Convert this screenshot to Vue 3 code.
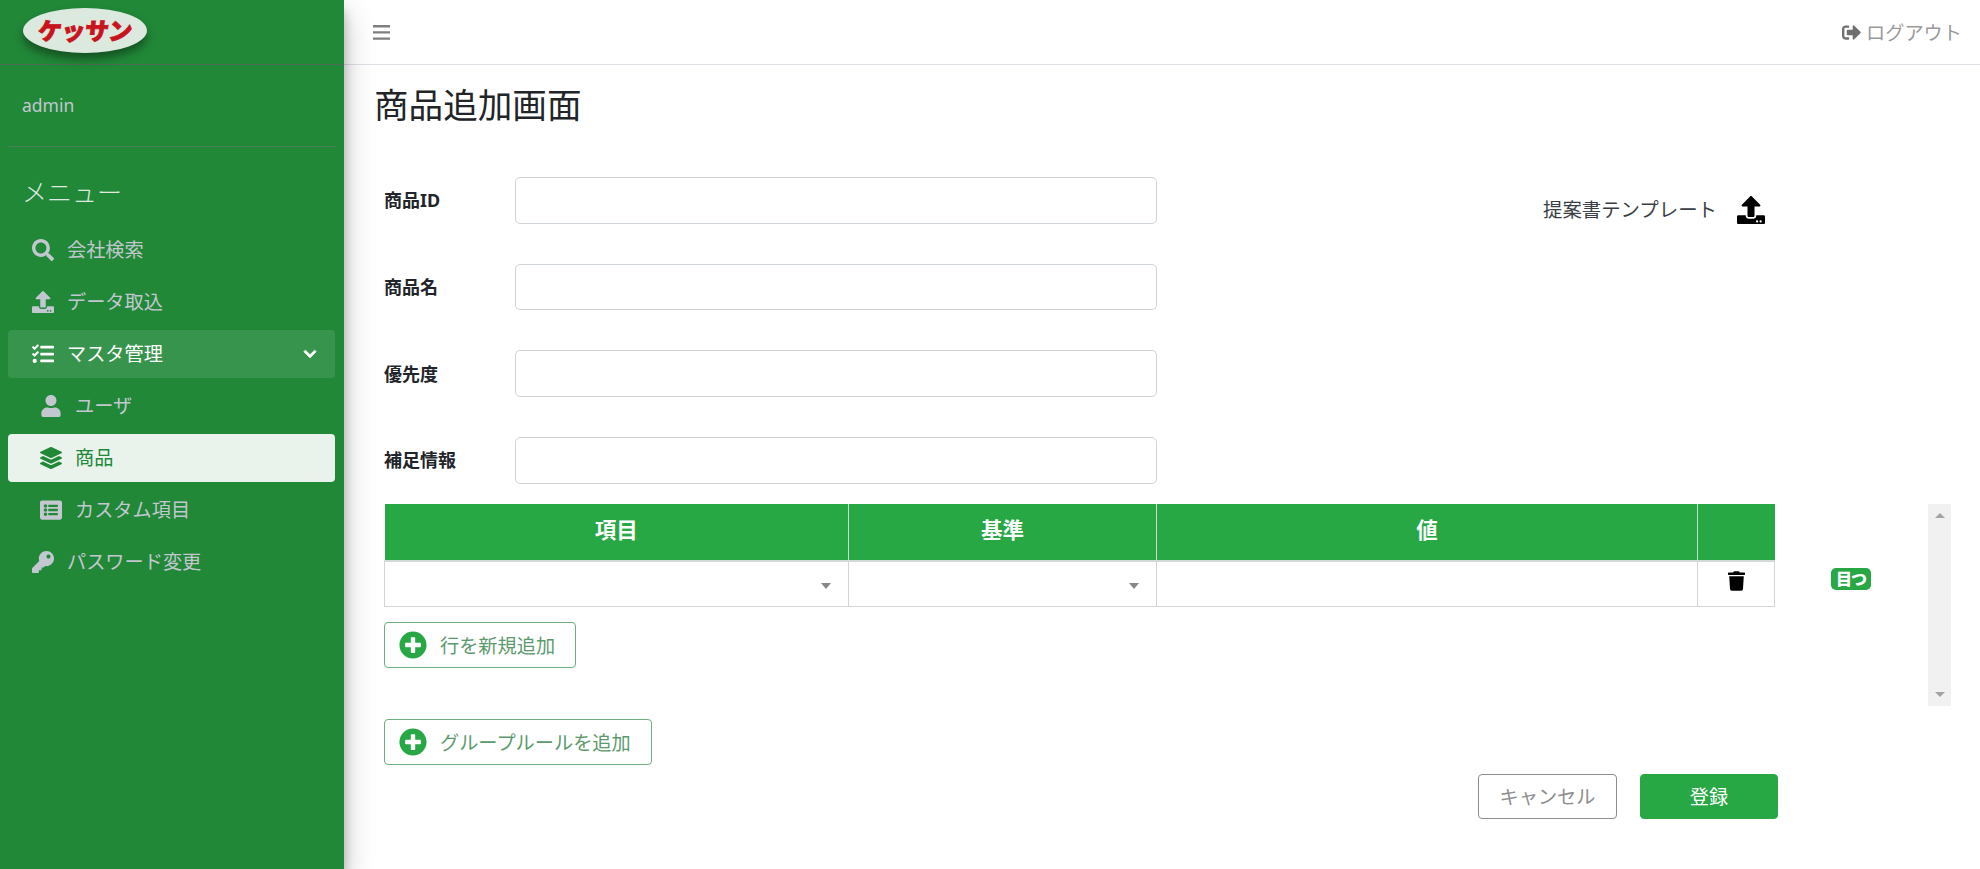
<template>
  <div class="page">
    <aside class="sidebar">
      <div class="brand">
        <div class="logo"><span class="logo-text">ケッサン</span></div>
      </div>
      <div class="user-panel">admin</div>
      <div class="menu-title">メニュー</div>
      <nav class="menu">
        <a v-for="item in menu" :key="item.label" class="menu-item" :class="[item.state, { sub: item.sub }]">
          <svg class="menu-icon" :viewBox="icons[item.icon].box"><path :d="icons[item.icon].d" /></svg>
          <span>{{ item.label }}</span>
          <svg v-if="item.state === 'open'" class="chevron" :viewBox="icons.chevron.box"><path :d="icons.chevron.d" /></svg>
        </a>
      </nav>
    </aside>

    <div class="main">
      <header class="topbar">
        <svg class="bars" viewBox="0 0 17 15"><path d="M0 0h17v2.4H0zM0 6.2h17v2.4H0zM0 12.4h17v2.4H0z" /></svg>
        <a class="logout">
          <svg class="logout-icon" :viewBox="icons.signout.box"><path :d="icons.signout.d" /></svg>
          ログアウト
        </a>
      </header>

      <section class="content">
        <h1 class="title">商品追加画面</h1>

        <div class="top-form">
          <div class="fields">
            <div v-for="field in fields" :key="field" class="field">
              <label>{{ field }}</label>
              <input type="text">
            </div>
          </div>
          <div class="template">
            <span>提案書テンプレート</span>
            <svg class="template-icon" :viewBox="icons.upload.box"><path :d="icons.upload.d" /></svg>
          </div>
        </div>

        <div class="rule-row">
          <div class="rule-main">
            <table class="rule-table">
              <thead>
                <tr>
                  <th class="col-item">項目</th>
                  <th class="col-base">基準</th>
                  <th class="col-value">値</th>
                  <th class="col-del"></th>
                </tr>
              </thead>
              <tbody>
                <tr>
                  <td><div class="select-cell"><i class="caret"></i></div></td>
                  <td><div class="select-cell"><i class="caret"></i></div></td>
                  <td></td>
                  <td class="del-cell">
                    <svg class="trash" :viewBox="icons.trash.box"><path :d="icons.trash.d" /></svg>
                  </td>
                </tr>
              </tbody>
            </table>
            <button class="outline-btn add-row">
              <svg class="plus" :viewBox="icons.plus.box"><path :d="icons.plus.d" /></svg>
              行を新規追加
            </button>
          </div>
          <span class="badge">目つ</span>
          <div class="scroll">
            <i class="arrow-up"></i>
            <i class="arrow-down"></i>
          </div>
        </div>

        <button class="outline-btn add-group">
          <svg class="plus" :viewBox="icons.plus.box"><path :d="icons.plus.d" /></svg>
          グループルールを追加
        </button>

        <div class="actions">
          <button class="btn-cancel">キャンセル</button>
          <button class="btn-submit">登録</button>
        </div>
      </section>
    </div>
  </div>
</template>

<script setup>
const icons = {
  search: { box: '0 0 512 512', d: 'M505 442.7L405.3 343c-4.5-4.5-10.6-7-17-7H372c27.6-35.3 44-79.7 44-128C416 93.1 322.9 0 208 0S0 93.1 0 208s93.1 208 208 208c48.3 0 92.7-16.4 128-44v16.3c0 6.4 2.5 12.5 7 17l99.7 99.7c9.4 9.4 24.6 9.4 33.9 0l28.3-28.3c9.4-9.4 9.4-24.6.1-34zM208 336c-70.7 0-128-57.2-128-128 0-70.7 57.2-128 128-128 70.7 0 128 57.2 128 128 0 70.7-57.2 128-128 128z' },
  upload: { box: '0 0 512 512', d: 'M296 384h-80c-13.3 0-24-10.7-24-24V192h-87.7c-17.8 0-26.7-21.5-14.1-34.1L242.3 5.7c7.5-7.5 19.8-7.5 27.3 0l152.2 152.2c12.6 12.6 3.7 34.1-14.1 34.1H320v168c0 13.3-10.7 24-24 24zm216-8v112c0 13.3-10.7 24-24 24H24c-13.3 0-24-10.7-24-24V376c0-13.3 10.7-24 24-24h136v8c0 30.9 25.1 56 56 56h80c30.9 0 56-25.1 56-56v-8h136c13.3 0 24 10.7 24 24zm-124 88c0-11-9-20-20-20s-20 9-20 20 9 20 20 20 20-9 20-20zm64 0c0-11-9-20-20-20s-20 9-20 20 9 20 20 20 20-9 20-20z' },
  tasks: { box: '0 0 512 512', d: 'M139.61 35.5a12 12 0 0 0-17 0L58.93 98.81l-22.7-22.12a12 12 0 0 0-17 0L3.53 92.41a12 12 0 0 0 0 17l47.59 47.4a12.78 12.78 0 0 0 17.61 0l15.59-15.62L156.52 69a12.09 12.09 0 0 0 .09-17zm0 159.19a12 12 0 0 0-17 0l-63.68 63.72-22.7-22.1a12 12 0 0 0-17 0L3.53 252a12 12 0 0 0 0 17L51 316.5a12.77 12.77 0 0 0 17.6 0l15.7-15.69 72.2-72.22a12 12 0 0 0 .09-16.9zM64 368c-26.49 0-48.59 21.5-48.59 48S37.53 464 64 464a48 48 0 0 0 0-96zm432 16H208a16 16 0 0 0-16 16v32a16 16 0 0 0 16 16h288a16 16 0 0 0 16-16v-32a16 16 0 0 0-16-16zm0-320H208a16 16 0 0 0-16 16v32a16 16 0 0 0 16 16h288a16 16 0 0 0 16-16V80a16 16 0 0 0-16-16zm0 160H208a16 16 0 0 0-16 16v32a16 16 0 0 0 16 16h288a16 16 0 0 0 16-16v-32a16 16 0 0 0-16-16z' },
  user: { box: '0 0 448 512', d: 'M224 256c70.7 0 128-57.3 128-128S294.7 0 224 0 96 57.3 96 128s57.3 128 128 128zm89.6 32h-16.7c-22.2 10.2-46.9 16-72.9 16s-50.6-5.8-72.9-16h-16.7C60.2 288 0 348.2 0 422.4V464c0 26.5 21.5 48 48 48h352c26.5 0 48-21.5 48-48v-41.6c0-74.2-60.2-134.4-134.4-134.4z' },
  layers: { box: '0 0 512 512', d: 'M12.41 148.02l232.94 105.67c6.8 3.09 14.49 3.09 21.29 0l232.94-105.67c16.55-7.51 16.55-32.52 0-40.03L266.65 2.31a25.607 25.607 0 0 0-21.29 0L12.41 107.98c-16.55 7.51-16.55 32.53 0 40.04zm487.18 88.28l-58.09-26.33-161.64 73.27c-7.56 3.43-15.59 5.17-23.86 5.17s-16.29-1.74-23.86-5.17L70.51 209.97l-58.1 26.33c-16.55 7.5-16.55 32.5 0 40l232.94 105.59c6.8 3.08 14.49 3.08 21.29 0L499.59 276.3c16.55-7.5 16.55-32.5 0-40zm0 127.8l-57.87-26.23-161.86 73.37c-7.56 3.43-15.59 5.17-23.86 5.17s-16.29-1.74-23.86-5.17L70.29 337.87 12.41 364.1c-16.55 7.5-16.55 32.5 0 40l232.94 105.59c6.8 3.08 14.49 3.08 21.29 0L499.59 404.1c16.55-7.5 16.55-32.5 0-40z' },
  list: { box: '0 0 512 512', d: 'M464 480H48c-26.51 0-48-21.49-48-48V80c0-26.51 21.49-48 48-48h416c26.51 0 48 21.49 48 48v352c0 26.51-21.49 48-48 48zM128 120c-22.091 0-40 17.909-40 40s17.909 40 40 40 40-17.909 40-40-17.909-40-40-40zm0 96c-22.091 0-40 17.909-40 40s17.909 40 40 40 40-17.909 40-40-17.909-40-40-40zm0 96c-22.091 0-40 17.909-40 40s17.909 40 40 40 40-17.909 40-40-17.909-40-40-40zm288-136v-32c0-6.627-5.373-12-12-12H204c-6.627 0-12 5.373-12 12v32c0 6.627 5.373 12 12 12h200c6.627 0 12-5.373 12-12zm0 96v-32c0-6.627-5.373-12-12-12H204c-6.627 0-12 5.373-12 12v32c0 6.627 5.373 12 12 12h200c6.627 0 12-5.373 12-12zm0 96v-32c0-6.627-5.373-12-12-12H204c-6.627 0-12 5.373-12 12v32c0 6.627 5.373 12 12 12h200c6.627 0 12-5.373 12-12z' },
  key: { box: '0 0 512 512', d: 'M512 176.001C512 273.203 433.202 352 336 352c-11.22 0-22.19-1.062-32.827-3.069l-24.012 27.014A23.999 23.999 0 0 1 261.223 384H224v40c0 13.255-10.745 24-24 24h-40v40c0 13.255-10.745 24-24 24H24c-13.255 0-24-10.745-24-24v-78.059c0-6.365 2.529-12.47 7.029-16.971l161.802-161.802C163.108 213.814 160 195.271 160 176 160 78.798 238.797.001 335.999 0 433.488-.001 512 78.511 512 176.001zM336 128c0 26.51 21.49 48 48 48s48-21.49 48-48-21.49-48-48-48-48 21.49-48 48z' },
  trash: { box: '0 0 448 512', d: 'M432 32H312l-9.4-18.7A24 24 0 0 0 281.1 0H166.8a23.72 23.72 0 0 0-21.4 13.3L136 32H16A16 16 0 0 0 0 48v32a16 16 0 0 0 16 16h416a16 16 0 0 0 16-16V48a16 16 0 0 0-16-16zM53.2 467a48 48 0 0 0 47.9 45h245.8a48 48 0 0 0 47.9-45L416 128H32z' },
  plus: { box: '0 0 512 512', d: 'M256 8C119 8 8 119 8 256s111 248 248 248 248-111 248-248S393 8 256 8zm144 276c0 6.6-5.4 12-12 12h-92v92c0 6.6-5.4 12-12 12h-56c-6.6 0-12-5.4-12-12v-92h-92c-6.6 0-12-5.4-12-12v-56c0-6.6 5.4-12 12-12h92v-92c0-6.6 5.4-12 12-12h56c6.6 0 12 5.4 12 12v92h92c6.6 0 12 5.4 12 12v56z' },
  chevron: { box: '0 0 448 512', d: 'M207.029 381.476L12.686 187.132c-9.373-9.373-9.373-24.569 0-33.941l22.667-22.667c9.357-9.357 24.522-9.375 33.901-.04L224 284.505l154.745-154.021c9.379-9.335 24.544-9.317 33.901.04l22.667 22.667c9.373 9.373 9.373 24.569 0 33.941L240.971 381.476c-9.373 9.372-24.569 9.372-33.942 0z' },
  signout: { box: '0 0 512 512', d: 'M497 273L329 441c-15 15-41 4.5-41-17v-96H152c-13.3 0-24-10.7-24-24v-96c0-13.3 10.7-24 24-24h136V88c0-21.4 25.9-32 41-17l168 168c9.3 9.4 9.3 24.6 0 34zM192 436v-40c0-6.6-5.4-12-12-12H96c-17.7 0-32-14.3-32-32V160c0-17.7 14.3-32 32-32h84c6.6 0 12-5.4 12-12V76c0-6.6-5.4-12-12-12H96c-53 0-96 43-96 96v192c0 53 43 96 96 96h84c6.6 0 12-5.4 12-12z' },
};

const menu = [
  { label: '会社検索', icon: 'search' },
  { label: 'データ取込', icon: 'upload' },
  { label: 'マスタ管理', icon: 'tasks', state: 'open' },
  { label: 'ユーザ', icon: 'user', sub: true },
  { label: '商品', icon: 'layers', sub: true, state: 'active' },
  { label: 'カスタム項目', icon: 'list', sub: true },
  { label: 'パスワード変更', icon: 'key' },
];

const fields = ['商品ID', '商品名', '優先度', '補足情報'];
</script>

<style>
html, body {
  margin: 0;
  height: 100%;
  overflow: hidden;
  background: #fff;
}
</style>

<style scoped>
.page {
  display: flex;
  height: 869px;
  font-family: "Noto Sans", "Noto Sans CJK JP", sans-serif;
  font-size: 19.2px;
  color: #212529;
}

.sidebar {
  position: relative;
  z-index: 2;
  flex: 0 0 344px;
  background: #218838;
  box-shadow: 0 14px 28px rgba(0, 0, 0, .25), 0 10px 10px rgba(0, 0, 0, .22);
  color: #c2c7d0;
}

.brand {
  height: 65px;
  box-sizing: border-box;
  border-bottom: 1px solid #4b6b52;
  padding: 8px 0 0 23px;
}

.logo {
  width: 124px;
  height: 45px;
  border-radius: 50%;
  background: #dce9df;
  box-shadow: 0 6px 10px rgba(0, 0, 0, .4);
  display: flex;
  align-items: center;
  justify-content: center;
}

.logo-text {
  color: #c8141c;
  font-size: 24px;
  line-height: 1;
  font-weight: 900;
  letter-spacing: -.5px;
  -webkit-text-stroke: .8px #c8141c;
  transform: skewX(-6deg);
}

.user-panel {
  margin: 0 8px;
  height: 82px;
  padding-left: 14px;
  box-sizing: border-box;
  border-bottom: 1px solid #4b7f58;
  display: flex;
  align-items: center;
  font-size: 17.5px;
  padding-bottom: 2px;
}

.menu-title {
  margin: 27px 0 0 22px;
  height: 36px;
  line-height: 36px;
  font-size: 25px;
  font-weight: 300;
  color: #dfe8e1;
}

.menu {
  display: flex;
  flex-direction: column;
  gap: 4px;
  margin: 16px 8px 0;
  width: 327px;
}

.menu-item {
  height: 48px;
  display: flex;
  align-items: center;
  padding-left: 24px;
  border-radius: 4px;
  line-height: 1;
}

.menu-icon {
  width: 22px;
  height: 22px;
  fill: #c2c7d0;
  margin-right: 13px;
  flex: none;
}

.menu-item.sub {
  padding-left: 32px;
}

.menu-item.open {
  background: rgba(255, 255, 255, .1);
  color: #fff;
}

.menu-item.open .menu-icon {
  fill: #fff;
}

.menu-item.active {
  background: #e9f3ec;
  color: #218838;
}

.menu-item.active .menu-icon {
  fill: #218838;
}

.chevron {
  width: 14px;
  height: 14px;
  fill: #fff;
  stroke: #fff;
  stroke-width: 30;
  margin-left: auto;
  margin-right: 18px;
}

.main {
  flex: 1;
  min-width: 0;
}

.topbar {
  height: 64px;
  border-bottom: 1px solid #dee2e6;
  display: flex;
  align-items: center;
  justify-content: space-between;
  padding: 0 18px 0 29px;
}

.bars {
  width: 17px;
  height: 15px;
  fill: #7f7f7f;
}

.logout {
  display: flex;
  align-items: center;
  color: #9a9a9a;
}

.logout-icon {
  width: 19px;
  height: 19px;
  fill: #6f6f6f;
  margin-right: 5px;
}

.content {
  padding: 0 0 0 40px;
}

.title {
  margin: 15px 0 0 -10px;
  height: 50px;
  line-height: 50px;
  font-size: 34.6px;
  font-weight: 400;
}

.top-form {
  display: flex;
  margin-top: 47px;
}

.fields {
  display: flex;
  flex-direction: column;
  gap: 40px;
  width: 773px;
}

.field {
  display: flex;
  align-items: center;
  height: 46.67px;
}

.field label {
  width: 131px;
  font-size: 18px;
  font-weight: 700;
  margin-top: -2px;
}

.field input {
  width: 642px;
  height: 46.67px;
  box-sizing: border-box;
  border: 1px solid #ced4da;
  border-radius: 5px;
  background: #fff;
}

.template {
  display: flex;
  align-items: flex-start;
  margin-left: 386px;
  padding-top: 19px;
  color: #3a3f45;
  font-size: 19.4px;
}

.template span {
  line-height: 28px;
}

.template-icon {
  width: 28px;
  height: 28px;
  margin-left: 20px;
  fill: #000;
}

.rule-row {
  display: flex;
  align-items: flex-start;
  margin-top: 20.33px;
}

.rule-main {
  width: 1390px;
}

.rule-table {
  width: 1390px;
  table-layout: fixed;
  border-collapse: collapse;
}

.rule-table th {
  height: 57px;
  padding: 0 0 6px;
  box-sizing: border-box;
  background: #28a745;
  color: #fff;
  font-size: 21.5px;
  font-weight: 700;
  border-left: 1px solid #cfd8d1;
  border-bottom: 2px solid #d3dad5;
}

.rule-table th:first-child {
  border-left: 0;
}

.col-item { width: 464px; }
.col-base { width: 308px; }
.col-value { width: 541px; }
.col-del { width: 77px; }

.rule-table td {
  height: 46px;
  padding: 0;
  box-sizing: border-box;
  border: 1px solid #d4d4d4;
}

.select-cell {
  display: flex;
  justify-content: flex-end;
  padding: 4px 17px 0 0;
}

.caret {
  border-left: 5px solid transparent;
  border-right: 5px solid transparent;
  border-top: 6px solid #888;
}

.del-cell {
  text-align: center;
}

.trash {
  display: block;
  width: 17px;
  height: 20px;
  margin: 0 auto 6px;
  fill: #000;
}

.outline-btn {
  display: flex;
  align-items: center;
  height: 46px;
  box-sizing: border-box;
  padding: 0 20px 0 14px;
  background: #fff;
  border: 1px solid #6fae80;
  border-radius: 4px;
  color: #5c9a6d;
  font: inherit;
}

.add-row {
  margin-top: 15px;
}

.plus {
  width: 28px;
  height: 28px;
  fill: #28a745;
  margin-right: 13px;
}

.badge {
  margin: 64px 0 0 57px;
  width: 40px;
  height: 22px;
  border-radius: 5px;
  background: #28a745;
  color: #fff;
  font-size: 16px;
  font-weight: 900;
  line-height: 22px;
  text-align: center;
  letter-spacing: -1px;
}

.scroll {
  margin-left: 57px;
  width: 23px;
  height: 202px;
  background: #f1f1f1;
  position: relative;
}

.arrow-up,
.arrow-down {
  position: absolute;
  left: 7px;
  border-left: 5px solid transparent;
  border-right: 5px solid transparent;
}

.arrow-up {
  top: 9px;
  border-bottom: 5px solid #a3a3a3;
}

.arrow-down {
  bottom: 9px;
  border-top: 5px solid #a3a3a3;
}

.add-group {
  margin-top: 13px;
}

.actions {
  display: flex;
  justify-content: flex-end;
  gap: 23px;
  width: 1394px;
  margin-top: 9px;
}

.btn-cancel,
.btn-submit {
  height: 45px;
  border-radius: 4px;
  font: inherit;
}

.btn-cancel {
  width: 139px;
  background: #fff;
  border: 1px solid #8d8d8d;
  color: #8d8d8d;
}

.btn-submit {
  width: 138px;
  background: #28a745;
  border: 1px solid #28a745;
  color: #fff;
}
</style>
